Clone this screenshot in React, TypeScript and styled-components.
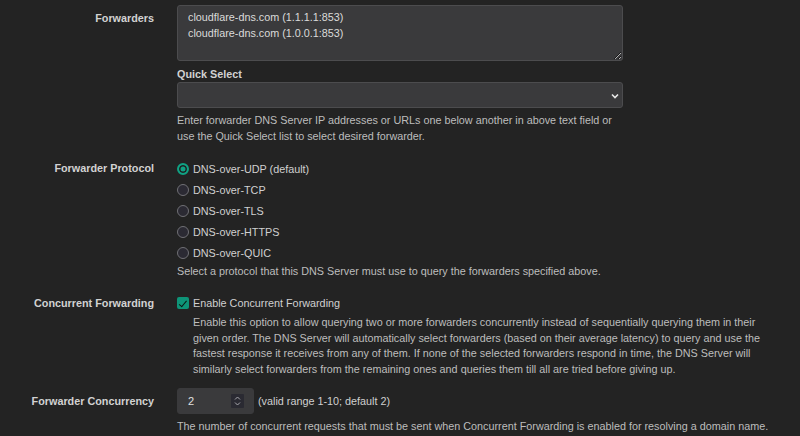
import React from "react";
import styled, { createGlobalStyle } from "styled-components";

const Global = createGlobalStyle`
  html, body { margin: 0; padding: 0; background: #232323; }
  body {
    font-family: "Liberation Sans", Arial, Helvetica, sans-serif;
    font-size: 10.8px;
    line-height: 16px;
    color: #c9c9c9;
    color-scheme: dark;
  }
  * { box-sizing: border-box; }
`;

const Page = styled.div`
  padding: 5px 16px 0 0;
  display: flex;
  flex-direction: column;
`;

const Row = styled.div<{ $mt?: number }>`
  display: grid;
  grid-template-columns: 154px 1fr;
  column-gap: 23px;
  align-items: start;
  margin-top: ${(p) => p.$mt ?? 0}px;
`;

const Label = styled.div<{ $pad?: number }>`
  text-align: right;
  font-weight: bold;
  color: #d2d2d2;
  padding-top: ${(p) => p.$pad ?? 0}px;
  line-height: 16px;
`;

const Field = styled.div<{ $max?: number }>`
  display: flex;
  flex-direction: column;
  max-width: ${(p) => (p.$max ? `${p.$max}px` : "none")};
`;

const TextArea = styled.textarea`
  width: 446px;
  height: 56px;
  background: #3a3a3c;
  border: 1px solid #4c4c4e;
  border-radius: 3px;
  color: #dadada;
  font-family: inherit;
  font-size: 10.8px;
  line-height: 16px;
  padding: 3px 10px;
  margin: 0;
  display: block;
  outline: none;
`;

const SubLabel = styled.div`
  font-weight: bold;
  color: #d2d2d2;
  margin-top: 5px;
`;

const SelectWrap = styled.div`
  position: relative;
  width: 446px;
  height: 26px;
`;

const Select = styled.select`
  appearance: none;
  width: 100%;
  height: 26px;
  background: #3a3a3c;
  border: 1px solid #4c4c4e;
  border-radius: 3px;
  color: #dadada;
  font-family: inherit;
  font-size: 11px;
  padding: 0 10px;
  margin: 0;
  display: block;
  outline: none;
`;

const Chevron = styled.svg`
  position: absolute;
  right: 4px;
  top: 11px;
  pointer-events: none;
`;

const Help = styled.div<{ $mt?: number; $indent?: number; $lh?: number }>`
  color: #bdbdbd;
  margin-top: ${(p) => p.$mt ?? 0}px;
  padding-left: ${(p) => p.$indent ?? 0}px;
  line-height: ${(p) => p.$lh ?? 16}px;
`;

const OptionLine = styled.label<{ $h?: number }>`
  display: flex;
  align-items: center;
  height: ${(p) => p.$h ?? 21}px;
  color: #d0d0d0;
  gap: 4px;
`;

const Radio = styled.input.attrs({ type: "radio" })`
  appearance: none;
  margin: 0 0 0 0;
  width: 12px;
  height: 12px;
  border-radius: 50%;
  border: 1px solid #707075;
  background: #2b2a33;
  &:checked {
    border: 2px solid #10a283;
    background: #10a283;
    box-shadow: inset 0 0 0 1.5px #1f1f22;
  }
`;

const Check = styled.input.attrs({ type: "checkbox" })`
  appearance: none;
  position: relative;
  margin: 0;
  width: 12px;
  height: 12px;
  border-radius: 2px;
  background: #0e9478;
  &::after {
    content: "";
    position: absolute;
    left: 4px;
    top: 1.5px;
    width: 3px;
    height: 6.5px;
    border: solid #0c1512;
    border-width: 0 1.8px 1.8px 0;
    transform: rotate(40deg);
  }
`;

const Inline = styled.div`
  display: flex;
  align-items: center;
  gap: 4px;
  color: #d0d0d0;
`;

const NumberWrap = styled.div`
  position: relative;
  width: 77px;
  height: 26px;
`;

const NumberInput = styled.input.attrs({ type: "number" })`
  width: 100%;
  height: 100%;
  background: #3a3a3c;
  border: 1px solid #3a3a3c;
  border-radius: 3px;
  color: #e0e0e0;
  font-family: inherit;
  font-size: 11px;
  padding: 0 8px 0 10px;
  margin: 0;
  outline: none;
  appearance: textfield;
  &::-webkit-inner-spin-button,
  &::-webkit-outer-spin-button {
    -webkit-appearance: none;
    margin: 0;
  }
`;

const Spinner = styled.svg`
  position: absolute;
  right: 10px;
  top: 6px;
  pointer-events: none;
`;

const protocols = [
  "DNS-over-UDP (default)",
  "DNS-over-TCP",
  "DNS-over-TLS",
  "DNS-over-HTTPS",
  "DNS-over-QUIC",
];

export default function App() {
  return (
    <>
      <Global />
      <Page>
        <Row>
          <Label $pad={5}>Forwarders</Label>
          <Field $max={446}>
            <TextArea
              readOnly
              defaultValue={"cloudflare-dns.com (1.1.1.1:853)\ncloudflare-dns.com (1.0.0.1:853)"}
            />
            <SubLabel>Quick Select</SubLabel>
            <SelectWrap>
              <Select defaultValue="">
                <option value=""></option>
              </Select>
              <Chevron width="8" height="6" viewBox="0 0 8 6">
                <path d="M1 1.5 L4 4.5 L7 1.5" fill="none" stroke="#e8e8e8" strokeWidth="1.6" />
              </Chevron>
            </SelectWrap>
            <Help $mt={4}>
              Enter forwarder DNS Server IP addresses or URLs one below another in above text field or use the Quick Select list to select desired forwarder.
            </Help>
          </Field>
        </Row>

        <Row $mt={14}>
          <Label $pad={2}>Forwarder Protocol</Label>
          <Field>
            {protocols.map((p, i) => (
              <OptionLine key={p}>
                <Radio name="proto" defaultChecked={i === 0} />
                <span>{p}</span>
              </OptionLine>
            ))}
            <Help>Select a protocol that this DNS Server must use to query the forwarders specified above.</Help>
          </Field>
        </Row>

        <Row $mt={14}>
          <Label $pad={2}>Concurrent Forwarding</Label>
          <Field>
            <OptionLine $h={20}>
              <Check defaultChecked />
              <span>Enable Concurrent Forwarding</span>
            </OptionLine>
            <Help $indent={16} $mt={2} $lh={15.6}>
              Enable this option to allow querying two or more forwarders concurrently instead of sequentially querying them in their given order. The DNS Server will automatically select forwarders (based on their average latency) to query and use the fastest response it receives from any of them. If none of the selected forwarders respond in time, the DNS Server will similarly select forwarders from the remaining ones and queries them till all are tried before giving up.
            </Help>
          </Field>
        </Row>

        <Row $mt={11}>
          <Label $pad={5}>Forwarder Concurrency</Label>
          <Field>
            <Inline>
              <NumberWrap>
                <NumberInput defaultValue={2} min={1} max={10} />
                <Spinner width="13" height="14" viewBox="0 0 13 14">
                  <rect width="13" height="14" rx="1" fill="#2a2a32" />
                  <path d="M4 5.5 L6.5 3 L9 5.5" fill="none" stroke="#a8a8ae" strokeWidth="1" />
                  <path d="M4 8.5 L6.5 11 L9 8.5" fill="none" stroke="#a8a8ae" strokeWidth="1" />
                </Spinner>
              </NumberWrap>
              <span>(valid range 1-10; default 2)</span>
            </Inline>
            <Help $mt={4}>
              The number of concurrent requests that must be sent when Concurrent Forwarding is enabled for resolving a domain name.
            </Help>
          </Field>
        </Row>
      </Page>
    </>
  );
}
